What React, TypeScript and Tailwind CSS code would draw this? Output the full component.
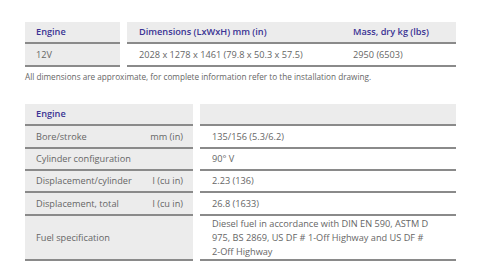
import React from "react";

const font = { fontFamily: '"Open Sans", "Liberation Sans", sans-serif' };

function Row1({ a, b, c, header }: { a: string; b: string; c: string; header?: boolean }) {
  const txt = header ? "font-semibold text-[#3b3494]" : "text-[#666666]";
  const h = header ? "h-[22px]" : "h-[23px]";
  return (
    <div className={`flex ${h}`}>
      <div className={`w-[95px] bg-[#ececec] border-b-2 border-[#8a8a8a] pl-[11px] flex items-center ${txt}`}>{a}</div>
      <div className={`ml-[7px] w-[214px] border-b-2 border-[#8a8a8a] pl-[12px] flex items-center ${header ? "bg-[#ececec]" : ""} ${txt}`}>{b}</div>
      <div className={`flex-1 border-b-2 border-[#8a8a8a] pl-[12px] flex items-center ${header ? "bg-[#ececec]" : ""} ${txt}`}>{c}</div>
    </div>
  );
}

function Row2({ label, unit, value, h }: { label: string; unit?: string; value: React.ReactNode; h: string }) {
  return (
    <div className={`flex ${h}`}>
      <div className="w-[168px] bg-[#ececec] border-b-2 border-[#8a8a8a] pl-[11px] pr-[10px] flex items-center justify-between text-[#666666]">
        <span>{label}</span>
        {unit ? <span>{unit}</span> : null}
      </div>
      <div className="ml-[7px] flex-1 border-b-2 border-[#8a8a8a] pl-[12px] pr-[10px] flex items-center text-[#666666] leading-[14px]">
        <div>{value}</div>
      </div>
    </div>
  );
}

export default function App() {
  return (
    <div className="w-[483px] h-[279px] bg-white text-[9.2px]" style={font}>
      <div className="pt-[22px] pl-[25px] w-[456px]">
        <Row1 header a="Engine" b="Dimensions (LxWxH) mm (in)" c="Mass, dry kg (lbs)" />
        <Row1 a="12V" b="2028 x 1278 x 1461 (79.8 x 50.3 x 57.5)" c="2950 (6503)" />
        <div className="mt-[4px] text-[8.2px] leading-[12px] text-[#666666] whitespace-nowrap">
          All dimensions are approximate, for complete information refer to the installation drawing.
        </div>
        <div className="mt-[21px]">
          <div className="flex h-[22px]">
            <div className="w-[168px] bg-[#ececec] border-b-2 border-[#8a8a8a] pl-[11px] flex items-center font-semibold text-[#3b3494]">
              Engine
            </div>
            <div className="ml-[7px] flex-1 bg-[#ececec] border-b-2 border-[#8a8a8a]" />
          </div>
          <Row2 h="h-[23px]" label="Bore/stroke" unit="mm (in)" value="135/156 (5.3/6.2)" />
          <Row2 h="h-[22px]" label="Cylinder configuration" value="90° V" />
          <Row2 h="h-[22px]" label="Displacement/cylinder" unit="l (cu in)" value="2.23 (136)" />
          <Row2 h="h-[23px]" label="Displacement, total" unit="l (cu in)" value="26.8 (1633)" />
          <Row2
            h="h-[45px]"
            label="Fuel specification"
            value={
              <>
                Diesel fuel in accordance with DIN EN 590, ASTM D 975, BS 2869, US DF #{" "}
                <span className="whitespace-nowrap">1-Off</span> Highway and US DF #{" "}
                <span className="whitespace-nowrap">2-Off</span> Highway
              </>
            }
          />
        </div>
      </div>
    </div>
  );
}
